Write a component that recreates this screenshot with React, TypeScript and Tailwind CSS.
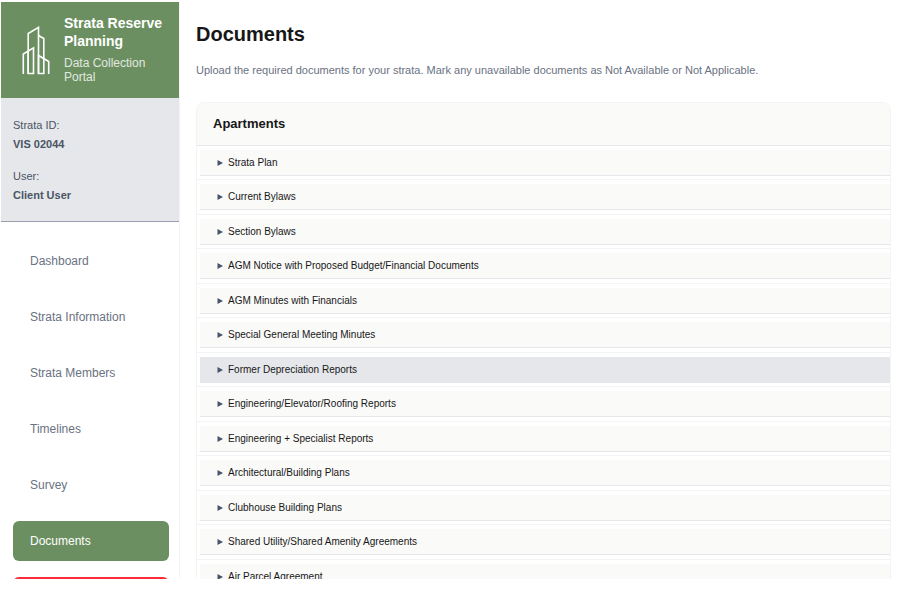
import clsx from "clsx";

const navItems = ["Dashboard", "Strata Information", "Strata Members", "Timelines", "Survey", "Documents"];

const apartmentDocuments = [
  "Strata Plan",
  "Current Bylaws",
  "Section Bylaws",
  "AGM Notice with Proposed Budget/Financial Documents",
  "AGM Minutes with Financials",
  "Special General Meeting Minutes",
  "Former Depreciation Reports",
  "Engineering/Elevator/Roofing Reports",
  "Engineering + Specialist Reports",
  "Architectural/Building Plans",
  "Clubhouse Building Plans",
  "Shared Utility/Shared Amenity Agreements",
  "Air Parcel Agreement",
];

function BuildingsLogo() {
  return (
    <svg width="28" height="50" viewBox="0 0 28 50" fill="none" stroke="white" strokeWidth="1.6" className="shrink-0">
      <path d="M1.300 49V29L11.500 22.800V48.500H6.200V8.500L16.500 2.300V48.500" />
      <path d="M6.200 26V48.500" />
      <path d="M16.500 10.500L21.800 13.500V48.500H16.500V30.500L26.700 36.500V49" />
    </svg>
  );
}

function Sidebar({ active }: { active: string }) {
  return (
    <aside className="flex w-[179px] shrink-0 flex-col border-r border-gray-100">
      <div className="flex h-24 shrink-0 items-center gap-[14px] bg-[#6b8f60] pl-[21px] text-white">
        <BuildingsLogo />
        <div className="pb-[2px]">
          <p className="text-[14px] leading-[18px] font-bold">Strata Reserve Planning</p>
          <p className="mt-[6px] pr-4 text-[12px] leading-[14px] text-white/80">Data Collection Portal</p>
        </div>
      </div>

      <dl className="shrink-0 border-b border-gray-400 bg-gray-200 px-3 pt-[18px] pb-4 text-[11px] leading-[19px] text-gray-600">
        <dt>Strata ID:</dt>
        <dd className="mb-[13px] font-bold">VIS 02044</dd>
        <dt>User:</dt>
        <dd className="font-bold">Client User</dd>
      </dl>

      <nav className="flex flex-col gap-4 pt-[19px] pr-[10px] pl-3">
        {navItems.map((item) => (
          <a
            key={item}
            href="#"
            className={clsx(
              "flex h-10 shrink-0 items-center rounded-md px-[17px] text-[12px]",
              item === active ? "bg-[#6b8f60] text-white" : "text-gray-500 hover:bg-gray-100",
            )}
          >
            {item}
          </a>
        ))}
        <button
          type="button"
          aria-label="Logout"
          className="h-10 shrink-0 rounded-md border-2 border-red-500 bg-red-500"
        />
      </nav>
    </aside>
  );
}

function DocumentRow({ title, highlighted }: { title: string; highlighted: boolean }) {
  return (
    <li className="border-b border-gray-100 pt-1 pl-[3px] odd:pb-[3px] even:pb-1">
      <details className="group">
        <summary
          className={clsx(
            "flex h-[26px] cursor-pointer list-none items-center gap-[5px] border-b border-gray-200 pl-[17px] text-[10px] text-neutral-900",
            highlighted ? "bg-gray-200" : "bg-[#fafaf9] hover:bg-gray-200",
          )}
        >
          <svg width="6" height="6" viewBox="0 0 6 6" className="fill-slate-600 group-open:rotate-90">
            <path d="M0.500 0L6 3L0.500 6Z" />
          </svg>
          {title}
        </summary>
      </details>
    </li>
  );
}

export default function App() {
  return (
    <div className="h-screen bg-white pt-[2px] pb-3 pl-px font-['Liberation_Sans',Arial,sans-serif]">
      <div className="flex h-full overflow-hidden">
        <Sidebar active="Documents" />

        <main className="min-w-0 flex-1 pt-[18px] pr-[14px] pl-4">
          <h1 className="text-[20px] leading-7 font-bold text-neutral-900">Documents</h1>
          <p className="mt-3 text-[11px] leading-5 text-gray-500">
            Upload the required documents for your strata. Mark any unavailable documents as Not Available or Not
            Applicable.
          </p>

          <section className="mt-[22px] overflow-hidden rounded-t-lg border border-gray-100">
            <h2 className="flex h-[43px] items-center border-b border-gray-200 bg-[#fafaf9] pl-4 text-[13px] font-bold text-neutral-900">
              Apartments
            </h2>
            <ul>
              {apartmentDocuments.map((title) => (
                <DocumentRow key={title} title={title} highlighted={title === "Former Depreciation Reports"} />
              ))}
            </ul>
          </section>
        </main>
      </div>
    </div>
  );
}
